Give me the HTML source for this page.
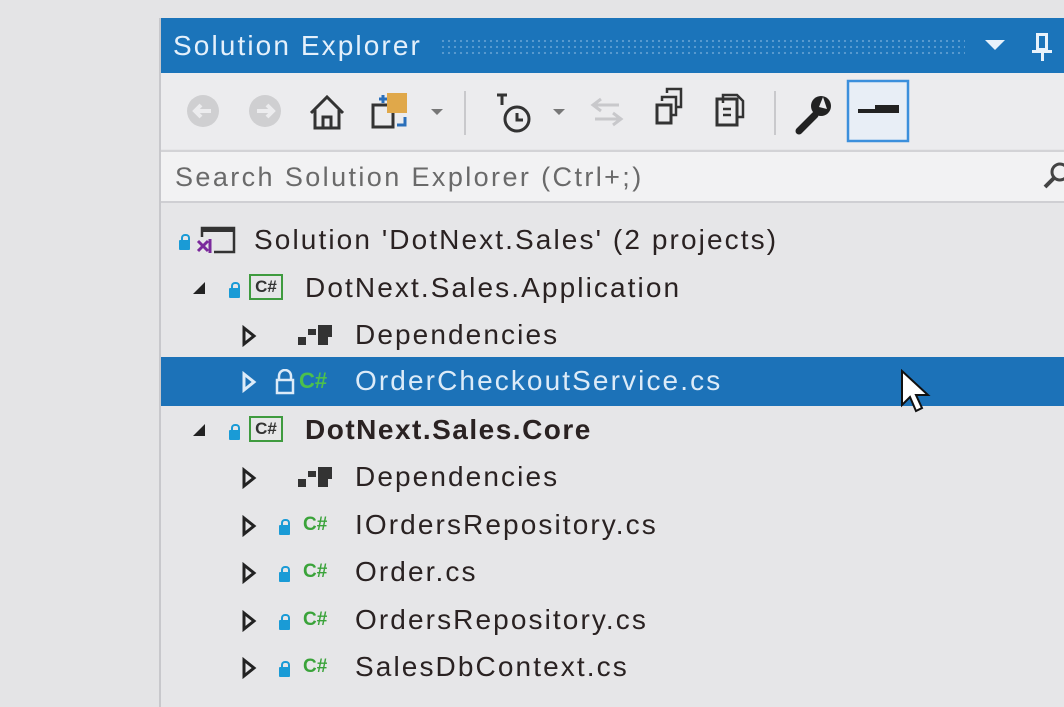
<!DOCTYPE html>
<html><head><style>
*{margin:0;padding:0;box-sizing:border-box}
body{width:1064px;height:707px;overflow:hidden;background:#e4e4e6;font-family:"Liberation Sans",sans-serif;position:relative}
.a{position:absolute}
#panel{left:159px;top:18px;width:905px;height:689px;background:#e6e6e8;border-left:2px solid #c8c8cc}
#title{left:161px;top:18px;width:903px;height:55px;background:#1b74ba;color:#e4f0fb;font-size:28px;line-height:55px;padding-left:12px;letter-spacing:2.1px}
#dots{left:440px;top:38px;width:525px;height:16px;background-image:radial-gradient(circle,#5a9bd0 1px,transparent 1.3px);background-size:6px 6px}
#tb{left:161px;top:73px;width:903px;height:76px;background:#ececee}
#search{left:161px;top:150px;width:903px;height:53px;background:#f2f2f3;border-top:2px solid #d3d3d6;border-bottom:2px solid #cfcfd3;color:#6a6a6a;font-size:27px;line-height:50px;padding-left:14px;letter-spacing:2.4px}
.row{position:absolute;left:161px;width:903px;height:48px;font-size:28px;line-height:48px;color:#2a2222;letter-spacing:2.1px}
.t{position:absolute;white-space:nowrap}
.sel{background:#1c72b8;color:#dcebf8}
.lock{position:absolute;width:11px;height:10px;background:#1a9bd6;border-radius:1px}
.lock:before{content:"";position:absolute;left:2px;top:-6px;width:5px;height:6px;border:2px solid #1a9bd6;border-bottom:none;border-radius:4px 4px 0 0}
.cs{position:absolute;width:34px;height:26px;border:2px solid #3f9b3f;font-size:17px;line-height:22px;text-align:center;color:#333;font-weight:bold;letter-spacing:0}
.csg{position:absolute;font-size:19px;font-weight:bold;color:#3aa33a;letter-spacing:0}
.tri{position:absolute;width:0;height:0}
.open{border-left:12px solid transparent;border-bottom:12px solid #222}
</style></head><body>
<div class="a" id="panel"></div>
<div class="a" id="title">Solution Explorer</div>
<div class="a" id="dots"></div>
<div class="a" style="left:985px;top:40px;width:0;height:0;border-left:10px solid transparent;border-right:10px solid transparent;border-top:10px solid #e8f2fb"></div>
<div class="a" style="left:1036px;top:33px;width:12px;height:18px;border:3px solid #e8f2fb"></div>
<div class="a" style="left:1032px;top:50px;width:20px;height:3px;background:#e8f2fb"></div>
<div class="a" style="left:1041px;top:52px;width:3px;height:9px;background:#e8f2fb"></div>
<div class="a" id="tb"></div>
<svg class="a" style="left:161px;top:73px" width="903" height="76">
<circle cx="42" cy="38" r="16" fill="#cfcfd1"/><path d="M50 38H34M40 32l-6 6 6 6" stroke="#ececee" stroke-width="4" fill="none"/>
<circle cx="104" cy="38" r="16" fill="#cfcfd1"/><path d="M96 38h16M106 32l6 6-6 6" stroke="#ececee" stroke-width="4" fill="none"/>
<path d="M150 40l16-16 16 16M154 37v18h24V37M162 55V44h8v11" stroke="#333" stroke-width="3" fill="none"/>
<rect x="212" y="32" width="20" height="22" fill="none" stroke="#333" stroke-width="3"/><rect x="226" y="20" width="20" height="20" fill="#e0a84a"/>
<path d="M218 26h8M222 22v8" stroke="#2a6fba" stroke-width="3"/><path d="M244 44v8h-8" stroke="#2a6fba" stroke-width="3" fill="none"/>
<path d="M270 36l6 6 6-6z" fill="#777"/>
<rect x="303" y="18" width="2" height="44" fill="#c9c9cc"/>
<circle cx="356" cy="46" r="12" fill="none" stroke="#333" stroke-width="3"/><path d="M356 40v7h6M336 22h10M341 22v10" stroke="#333" stroke-width="3" fill="none"/>
<path d="M392 36l6 6 6-6z" fill="#777"/>
<path d="M432 32h26M440 26l-8 6 8 6M460 46h-26M452 40l8 6-8 6" stroke="#c8c8cb" stroke-width="3" fill="none"/>
<rect x="496" y="32" width="14" height="18" fill="none" stroke="#333" stroke-width="3"/><path d="M501 28v-4h14v18h-4M506 20v-4h14v18h-4" stroke="#333" stroke-width="2.5" fill="none"/>
<rect x="556" y="26" width="20" height="26" fill="none" stroke="#333" stroke-width="3"/><path d="M562 30v-8h14l6 6v16h-6M562 36h8M562 42h8" stroke="#333" stroke-width="2.5" fill="none"/>
<rect x="613" y="18" width="2" height="44" fill="#c9c9cc"/>
<path d="M638 58l16-16" stroke="#222" stroke-width="7" stroke-linecap="round"/><circle cx="660" cy="33" r="10" fill="#222"/><path d="M662 24l-4 10 8 2" fill="#ececee"/>
<rect x="687" y="8" width="60" height="60" fill="#e8eef6" stroke="#3b8fdc" stroke-width="2.5"/>
<rect x="697" y="36" width="40" height="4" fill="#222"/><rect x="714" y="32" width="24" height="8" fill="#222"/>
</svg>
<div class="a" id="search">Search Solution Explorer (Ctrl+;)</div>
<svg class="a" style="left:1040px;top:160px" width="24" height="32"><circle cx="20" cy="12" r="8" fill="none" stroke="#444" stroke-width="3"/><path d="M14 18l-9 9" stroke="#444" stroke-width="4"/></svg>

<div class="row" style="top:216px">
<div class="lock" style="left:18px;top:24px"></div>
<svg class="a" style="left:33px;top:9px" width="42" height="30"><rect x="8" y="3" width="32" height="24" fill="none" stroke="#333" stroke-width="2.5"/><rect x="8" y="3" width="32" height="4" fill="#333"/><rect x="2" y="12" width="18" height="17" fill="#e6e6e8"/><path d="M4 16l10 10M14 16L4 26M16 14v14" stroke="#7b2a9c" stroke-width="3"/></svg>
<div class="t" style="left:93px">Solution 'DotNext.Sales' (2 projects)</div></div>

<div class="row" style="top:264px">
<div class="tri open a" style="left:32px;top:18px"></div>
<div class="lock" style="left:68px;top:24px"></div>
<div class="cs" style="left:88px;top:10px">C#</div>
<div class="t" style="left:144px">DotNext.Sales.Application</div></div>

<div class="row" style="top:311px">
<svg class="a" style="left:80px;top:14px" width="16" height="22"><path d="M3 3l10 8-10 8z" fill="none" stroke="#222" stroke-width="3"/></svg>
<svg class="a" style="left:137px;top:12px" width="40" height="24"><rect x="0" y="14" width="8" height="8" fill="#333"/><rect x="10" y="6" width="8" height="6" fill="#333"/><rect x="20" y="2" width="14" height="12" fill="#333"/><rect x="20" y="14" width="10" height="8" fill="#333"/></svg>
<div class="t" style="left:194px">Dependencies</div></div>

<div class="row sel" style="top:357px;height:49px">
<svg class="a" style="left:80px;top:14px" width="16" height="22"><path d="M3 3l10 8-10 8z" fill="none" stroke="#dcebf8" stroke-width="3"/></svg>
<svg class="a" style="left:113px;top:12px" width="22" height="26"><path d="M5 11V7a6 6 0 0 1 12 0v4" fill="none" stroke="#dcebf8" stroke-width="2.5"/><rect x="3" y="11" width="16" height="13" fill="none" stroke="#dcebf8" stroke-width="2.5"/></svg>
<div class="csg" style="left:138px;top:0;color:#4cc04c;font-size:22px">C#</div>
<div class="t" style="left:194px">OrderCheckoutService.cs</div>
<svg class="a" style="left:738px;top:12px" width="40" height="52"><path d="M3 2v34l8-8 6 14 6-3-6-13h12z" fill="#fff" stroke="#111" stroke-width="2"/></svg>
</div>

<div class="row" style="top:406px">
<div class="tri open a" style="left:32px;top:18px"></div>
<div class="lock" style="left:68px;top:24px"></div>
<div class="cs" style="left:88px;top:10px">C#</div>
<div class="t" style="left:144px;font-weight:bold;letter-spacing:1.5px">DotNext.Sales.Core</div></div>

<div class="row" style="top:453px">
<svg class="a" style="left:80px;top:14px" width="16" height="22"><path d="M3 3l10 8-10 8z" fill="none" stroke="#222" stroke-width="3"/></svg>
<svg class="a" style="left:137px;top:12px" width="40" height="24"><rect x="0" y="14" width="8" height="8" fill="#333"/><rect x="10" y="6" width="8" height="6" fill="#333"/><rect x="20" y="2" width="14" height="12" fill="#333"/><rect x="20" y="14" width="10" height="8" fill="#333"/></svg>
<div class="t" style="left:194px">Dependencies</div></div>

<div class="row" style="top:501px">
<svg class="a" style="left:80px;top:14px" width="16" height="22"><path d="M3 3l10 8-10 8z" fill="none" stroke="#222" stroke-width="3"/></svg>
<div class="lock" style="left:118px;top:24px"></div><div class="csg" style="left:142px;top:0">C#</div>
<div class="t" style="left:194px">IOrdersRepository.cs</div></div>

<div class="row" style="top:548px">
<svg class="a" style="left:80px;top:14px" width="16" height="22"><path d="M3 3l10 8-10 8z" fill="none" stroke="#222" stroke-width="3"/></svg>
<div class="lock" style="left:118px;top:24px"></div><div class="csg" style="left:142px;top:0">C#</div>
<div class="t" style="left:194px">Order.cs</div></div>

<div class="row" style="top:596px">
<svg class="a" style="left:80px;top:14px" width="16" height="22"><path d="M3 3l10 8-10 8z" fill="none" stroke="#222" stroke-width="3"/></svg>
<div class="lock" style="left:118px;top:24px"></div><div class="csg" style="left:142px;top:0">C#</div>
<div class="t" style="left:194px">OrdersRepository.cs</div></div>

<div class="row" style="top:643px">
<svg class="a" style="left:80px;top:14px" width="16" height="22"><path d="M3 3l10 8-10 8z" fill="none" stroke="#222" stroke-width="3"/></svg>
<div class="lock" style="left:118px;top:24px"></div><div class="csg" style="left:142px;top:0">C#</div>
<div class="t" style="left:194px">SalesDbContext.cs</div></div>
</body></html>
